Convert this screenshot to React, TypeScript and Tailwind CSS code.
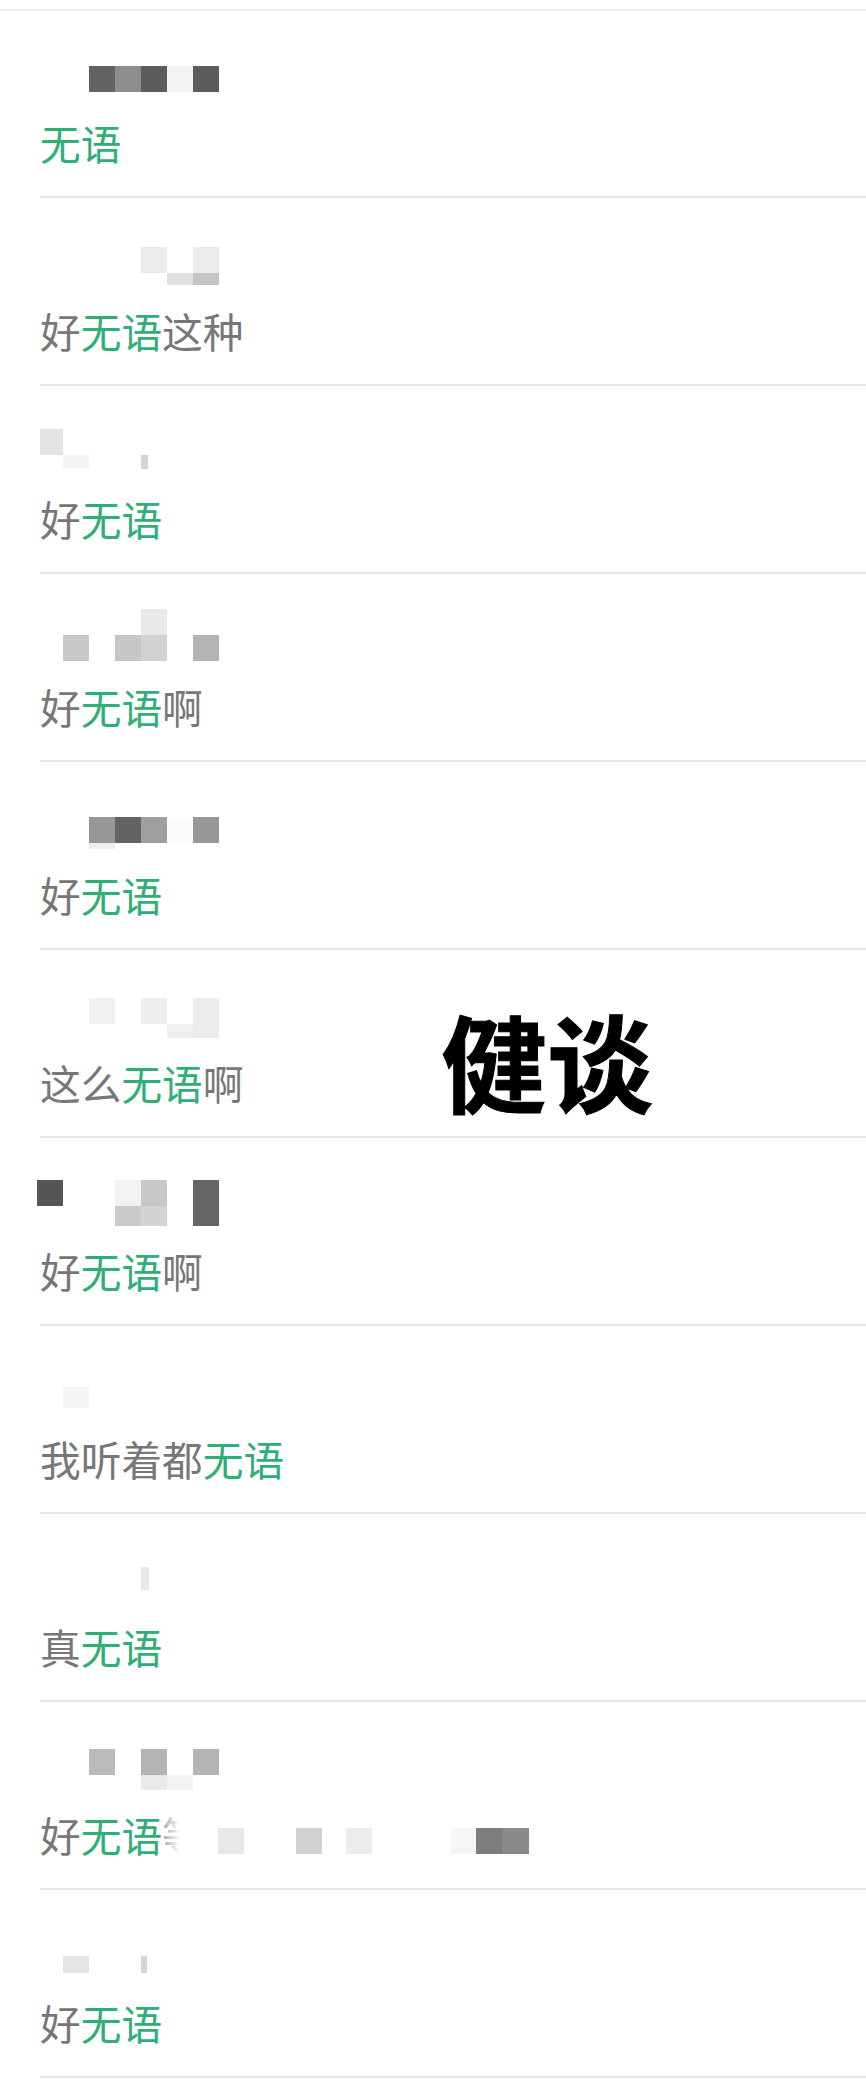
type Block = [number, number, number, number, string];
type Part = { t: string; g?: boolean };
type Row = { parts: Part[]; blocks: Block[]; tail?: boolean };

const G = (t: string): Part => ({ t, g: true });
const T = (t: string): Part => ({ t });

// Mosaic squares: [x on the page, y inside the row, width, height, colour]
const rows: Row[] = [
  {
    parts: [G("无语")],
    blocks: [
      [89, 57, 26, 26, "#636363"],
      [115, 57, 26, 26, "#8e8e8e"],
      [141, 57, 26, 26, "#5c5c5c"],
      [167, 57, 26, 26, "#f3f3f3"],
      [193, 57, 26, 26, "#5c5c5c"],
    ],
  },
  {
    parts: [T("好"), G("无语"), T("这种")],
    blocks: [
      [141, 50, 26, 26, "#ebebeb"],
      [193, 50, 26, 26, "#ebebeb"],
      [167, 76, 26, 12, "#e0e0e0"],
      [193, 76, 26, 12, "#c4c4c4"],
    ],
  },
  {
    parts: [T("好"), G("无语")],
    blocks: [
      [40, 44, 23, 26, "#e3e3e3"],
      [63, 70, 26, 13, "#f3f3f3"],
      [141, 70, 7, 14, "#d5d5d5"],
    ],
  },
  {
    parts: [T("好"), G("无语"), T("啊")],
    blocks: [
      [141, 36, 26, 26, "#e8e8e8"],
      [63, 62, 26, 26, "#c8c8c8"],
      [115, 62, 26, 26, "#c6c6c6"],
      [141, 62, 26, 26, "#d2d2d2"],
      [193, 62, 26, 26, "#b3b3b3"],
    ],
  },
  {
    parts: [T("好"), G("无语")],
    blocks: [
      [89, 56, 26, 26, "#979797"],
      [115, 56, 26, 26, "#636363"],
      [141, 56, 26, 26, "#a0a0a0"],
      [167, 56, 26, 26, "#fafafa"],
      [193, 56, 26, 26, "#979797"],
      [89, 82, 26, 6, "#efefef"],
    ],
  },
  {
    parts: [T("这么"), G("无语"), T("啊")],
    blocks: [
      [89, 49, 26, 26, "#f0f0f0"],
      [141, 49, 26, 26, "#eeeeee"],
      [193, 49, 26, 40, "#ececec"],
      [167, 75, 26, 14, "#f0f0f0"],
    ],
  },
  {
    parts: [T("好"), G("无语"), T("啊")],
    blocks: [
      [37, 43, 26, 26, "#555555"],
      [115, 43, 26, 26, "#f2f2f2"],
      [141, 43, 26, 26, "#c8c8c8"],
      [193, 43, 26, 46, "#656565"],
      [115, 69, 26, 20, "#cacaca"],
      [141, 69, 26, 20, "#d4d4d4"],
    ],
  },
  {
    parts: [T("我听着都"), G("无语")],
    blocks: [[63, 62, 26, 21, "#f5f5f5"]],
  },
  {
    parts: [T("真"), G("无语")],
    blocks: [[141, 54, 8, 23, "#e8e8e8"]],
  },
  {
    parts: [T("好"), G("无语")],
    tail: true,
    blocks: [
      [89, 48, 26, 26, "#bbbbbb"],
      [141, 48, 26, 26, "#b4b4b4"],
      [193, 48, 26, 26, "#b4b4b4"],
      [141, 74, 26, 15, "#e9e9e9"],
      [167, 74, 26, 15, "#f3f3f3"],
    ],
  },
  {
    parts: [T("好"), G("无语")],
    blocks: [
      [63, 67, 26, 17, "#e4e4e4"],
      [141, 67, 6, 17, "#d4d4d4"],
    ],
  },
];

// Mosaic on the text line of the tenth row; x counts from the left of this drawing.
const tailBlocks: Block[] = [
  [38, 17, 26, 26, "#e8e8e8"],
  [116, 17, 26, 26, "#d2d2d2"],
  [166, 17, 26, 26, "#ececec"],
  [271, 17, 25, 26, "#f6f6f6"],
  [296, 17, 26, 26, "#7d7d7d"],
  [322, 17, 27, 26, "#8a8a8a"],
];

function Mosaic({ blocks, className }: { blocks: Block[]; className: string }) {
  return (
    <svg className={className} aria-hidden="true">
      {blocks.map(([x, y, w, h, fill], i) => (
        <rect key={i} x={x} y={y} width={w} height={h} fill={fill} />
      ))}
    </svg>
  );
}

export default function App() {
  return (
    <div className="relative h-[2100px] w-[866px] overflow-hidden bg-white font-['Noto_Sans_CJK_SC','Noto_Sans',sans-serif]">
      <div className="h-[11px] border-b-2 border-[#efefef]" />
      <div className="-mt-px flex flex-col">
        {rows.map((row, i) => (
          <div key={i} className="ml-[40px] flex h-[188px] flex-col border-b-2 border-[#e6e6e6]">
            <Mosaic blocks={row.blocks} className="-mt-px -ml-[40px] h-[110px] w-[866px] shrink-0 overflow-visible" />
            <div className="flex h-[48px] items-center text-[40.7px] leading-[48px] text-[#777777]">
              {row.parts.map((p, j) => (
                <span key={j} className={p.g ? "text-[#2fae76]" : ""}>
                  {p.t}
                </span>
              ))}
              {row.tail && (
                <>
                  <span className="relative h-[48px] w-[18px] overflow-hidden text-[#8a8a8a]">
                    等
                    <span className="absolute inset-0 bg-gradient-to-r from-white/20 to-white" />
                  </span>
                  <Mosaic blocks={tailBlocks} className="h-[48px] w-[400px]" />
                </>
              )}
            </div>
          </div>
        ))}
      </div>
      <div className="absolute left-[441px] top-[989px] flex h-[140px] items-center text-[106px] leading-none font-bold whitespace-nowrap text-black [-webkit-text-stroke:1px_black]">
        健谈
      </div>
    </div>
  );
}
